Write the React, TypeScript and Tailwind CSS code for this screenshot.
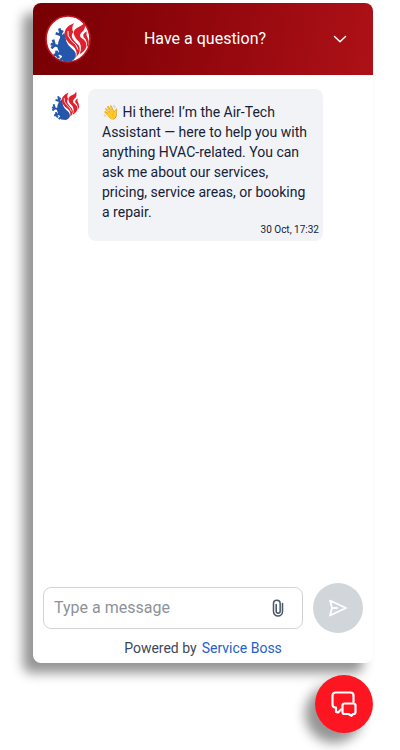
import React from "react"

interface IconProps {
  className?: string
}

const Emblem = () => (
  <>
    <path
      fill="#2457ab"
      d="M61 56 Q65 68 67 82 Q71 95 84 104 Q98 114 95 130 Q90 139 79 143 L58 141 Q52 134 54 126 Q44 122 44 110 Q38 102 42 92 Q42 74 61 56 Z"
    />
    <path
      fill="none"
      stroke="#2457ab"
      strokeWidth="8"
      d="M56 84 46 43M35 58l13 4 8-13M52 99 20 90M27 77l5 17-10 9M58 114l-29 10M38 110l-1 12 8 10M62 128l-14 11"
    />
    <path
      fill="#e0202d"
      d="M91 27 Q74 33 65 46 Q58 60 66 76 Q73 89 87 97 Q101 108 97 129 Q114 112 104 94 Q93 84 86 74 Q80 63 88 54 Q80 40 91 27 Z"
    />
    <path
      fill="#e0202d"
      d="M122 24 Q116 35 104 39 Q89 45 89 58 Q91 71 103 81 Q117 94 107 121 Q133 104 126 86 Q121 77 110 70 Q105 62 114 54 Q127 45 122 24 Z"
    />
    <path fill="#e0202d" d="M128 52 Q114 60 119 70 Q131 80 129 100 Q138 87 132 74 Q125 64 128 52 Z" />
    <path fill="none" stroke="#fff" strokeWidth="3" d="M72 51 Q68 64 82 80 Q100 92 102 107" />
  </>
)

const BadgeLogo = ({ className }: IconProps) => (
  <svg viewBox="3 3 138 144" className={className} aria-hidden="true">
    <ellipse cx="72" cy="75" rx="66" ry="69" fill="#fff" stroke="#c9141f" strokeWidth="5" />
    <Emblem />
  </svg>
)

const Logo = ({ className }: IconProps) => (
  <svg viewBox="16 22 122 124" className={className} aria-hidden="true">
    <Emblem />
  </svg>
)

const Paperclip = ({ className }: IconProps) => (
  <svg
    viewBox="0 0 12 20"
    className={className}
    fill="none"
    stroke="currentColor"
    strokeWidth="1.7"
    strokeLinecap="round"
    aria-hidden="true"
  >
    <path d="M11 5v9a5 5 0 0 1-10 0V5a3.7 3.7 0 0 1 7.4 0v8.5a2.2 2.2 0 0 1-4.4 0V6" />
  </svg>
)

const SendIcon = ({ className }: IconProps) => (
  <svg
    viewBox="0 0 20 20"
    className={className}
    fill="none"
    stroke="currentColor"
    strokeWidth="1.8"
    strokeLinecap="round"
    strokeLinejoin="round"
    aria-hidden="true"
  >
    <path d="M2 2.5 18 10 2 17.5 4 10ZM4 10h5" />
  </svg>
)

const ChatIcon = ({ className }: IconProps) => (
  <svg
    viewBox="0 0 26 26"
    className={className}
    fill="none"
    stroke="currentColor"
    strokeWidth="2.2"
    strokeLinecap="round"
    strokeLinejoin="round"
    aria-hidden="true"
  >
    <path d="M22.500 11V4.500a3 3 0 0 0-3-3H4.500a3 3 0 0 0-3 3v9a3 3 0 0 0 3 3h.5V21l2 .5 3-3" />
    <path d="M13.500 12.500h9a2 2 0 0 1 2 2V21a2 2 0 0 1-2 2H22l-1.500 1.800-3-1.800h-4a2 2 0 0 1-2-2v-6.500a2 2 0 0 1 2-2Z" />
  </svg>
)

const Header = () => (
  <header className="flex h-[72px] shrink-0 items-center justify-between rounded-t-lg bg-linear-100 from-[#770003] to-[#ad1117] px-3 text-white">
    <BadgeLogo className="h-12 w-[46px]" />
    <h1 className="text-base">Have a question?</h1>
    <button type="button" aria-label="Close chat" className="flex size-[42px] items-center justify-center">
      <svg
        viewBox="0 0 14 8"
        className="h-2 w-3.5"
        fill="none"
        stroke="currentColor"
        strokeWidth="1.5"
        strokeLinecap="round"
        strokeLinejoin="round"
        aria-hidden="true"
      >
        <path d="M1.500 1.500 7 6.800l5.500-5.300" />
      </svg>
    </button>
  </header>
)

const Message = () => (
  <div className="flex items-start gap-2 pr-[50px] pl-[18px]">
    <Logo className="mt-0.5 h-[30px] w-[29px] shrink-0" />
    <div className="min-w-0 flex-1 rounded-lg bg-[#f1f3f7] pt-[13px] pr-1 pb-1 pl-3.5 text-[#172238]">
      <p className="pr-2 text-sm leading-5">
        👋 Hi there! I’m the Air-Tech Assistant — here to help you with anything HVAC-related. You can ask me about our
        services, pricing, service areas, or booking a repair.
      </p>
      <time className="block text-right text-[10px] leading-[15px]">30 Oct, 17:32</time>
    </div>
  </div>
)

const Composer = () => (
  <form className="flex items-center gap-2.5 px-2.5" onSubmit={(e) => e.preventDefault()}>
    <div className="flex h-[42px] min-w-0 flex-1 items-center rounded-lg border border-[#d1d3d6] pr-4 pl-2.5">
      <input
        type="text"
        aria-label="Message"
        placeholder="Type a message"
        className="min-w-0 flex-1 text-base text-[#172238] outline-none placeholder:text-[#8d929a]"
      />
      <button type="button" aria-label="Attach a file" className="px-0.5 text-[#4b5768]">
        <Paperclip className="h-[18px] w-3" />
      </button>
    </div>
    <button
      type="submit"
      aria-label="Send"
      className="flex size-[50px] shrink-0 items-center justify-center rounded-full bg-[#d1d6db] text-white"
    >
      <SendIcon className="size-5" />
    </button>
  </form>
)

const App: React.FC = () => {
  return (
    <div className="flex min-h-screen flex-col items-end gap-3 bg-white pt-[3px] pr-[27px] pb-[17px] pl-[33px] font-['Roboto',sans-serif]">
      <main className="flex w-full flex-1 flex-col rounded-lg bg-white shadow-[-10px_10px_12px_rgba(0,0,0,0.42)]">
        <Header />

        {/* Conversation */}
        <section className="flex-1 pt-3.5">
          <Message />
        </section>

        <Composer />
        <p className="flex justify-center gap-[5px] py-[5px] text-sm leading-5 text-[#3c4858]">
          <span>Powered by</span>
          <a href="#service-boss" className="text-[#2560c9]">
            Service Boss
          </a>
        </p>
      </main>

      <button
        type="button"
        aria-label="Toggle chat"
        className="flex size-[58px] items-center justify-center rounded-full bg-[#fe1522] text-white shadow-[-10px_10px_12px_rgba(0,0,0,0.42)]"
      >
        <ChatIcon className="size-[26px]" />
      </button>
    </div>
  )
}

export default App
